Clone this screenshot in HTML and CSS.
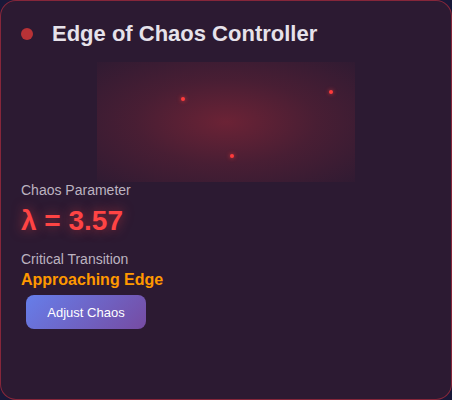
FILE: index.html
```html
<!DOCTYPE html>
<html>
<head>
<meta charset="utf-8">
<link rel="stylesheet" href="styles.css">
</head>
<body>
<div class="card">
  <div class="header">
    <span class="dot"></span>
    <h2 class="title">Edge of Chaos Controller</h2>
  </div>
  <div class="visual">
    <span class="particle" style="left:84px;top:35px"></span>
    <span class="particle" style="left:232px;top:28px"></span>
    <span class="particle" style="left:133px;top:92px"></span>
  </div>
  <div class="label">Chaos Parameter</div>
  <div class="value">λ = 3.57</div>
  <div class="label label-gap">Critical Transition</div>
  <div class="status">Approaching Edge</div>
  <button class="btn">Adjust Chaos</button>
</div>
</body>
</html>
```
FILE: styles.css
```css
html, body {
  margin: 0;
  padding: 0;
  background: #1a1838;
}
.card {
  box-sizing: border-box;
  width: 452px;
  height: 400px;
  border: 1px solid rgba(210, 50, 65, 0.55);
  border-radius: 16px;
  background: #2c1a32;
  padding: 20px;
  font-family: "Liberation Sans", Arial, sans-serif;
}
.header {
  display: flex;
  align-items: center;
  gap: 19px;
  height: 26px;
  margin-bottom: 15px;
}
.dot {
  width: 12px;
  height: 12px;
  border-radius: 50%;
  background: #b83236;
  flex: none;
}
.title {
  margin: 0;
  font-size: 22px;
  font-weight: bold;
  color: #e6e2ea;
}
.visual {
  position: relative;
  width: 258px;
  height: 120px;
  margin: 0 auto;
  background: radial-gradient(ellipse at center, rgba(220, 50, 60, 0.36) 0%, rgba(220, 50, 60, 0.16) 50%, rgba(220, 50, 60, 0.025) 100%);
}
.particle {
  position: absolute;
  width: 4px;
  height: 4px;
  border-radius: 50%;
  background: #ff3b3b;
  box-shadow: 0 0 4px rgba(255, 60, 60, 0.8);
}
.label {
  font-size: 14px;
  line-height: 16px;
  color: #bcb3c0;
}
.label-gap {
  margin-top: 14px;
}
.value {
  margin-top: 7px;
  font-size: 28px;
  line-height: 32px;
  font-weight: bold;
  color: #ff4444;
  text-shadow: 0 0 12px rgba(255, 68, 68, 0.55);
}
.status {
  margin-top: 4px;
  font-size: 16px;
  line-height: 18px;
  font-weight: bold;
  color: #ff9800;
}
.btn {
  display: block;
  margin: 6px 0 0 5px;
  width: 120px;
  height: 34px;
  border: none;
  border-radius: 8px;
  background: linear-gradient(135deg, #667eea 0%, #764ba2 100%);
  color: #ffffff;
  font-family: "Liberation Sans", Arial, sans-serif;
  font-size: 13px;
  padding: 0;
}
```
